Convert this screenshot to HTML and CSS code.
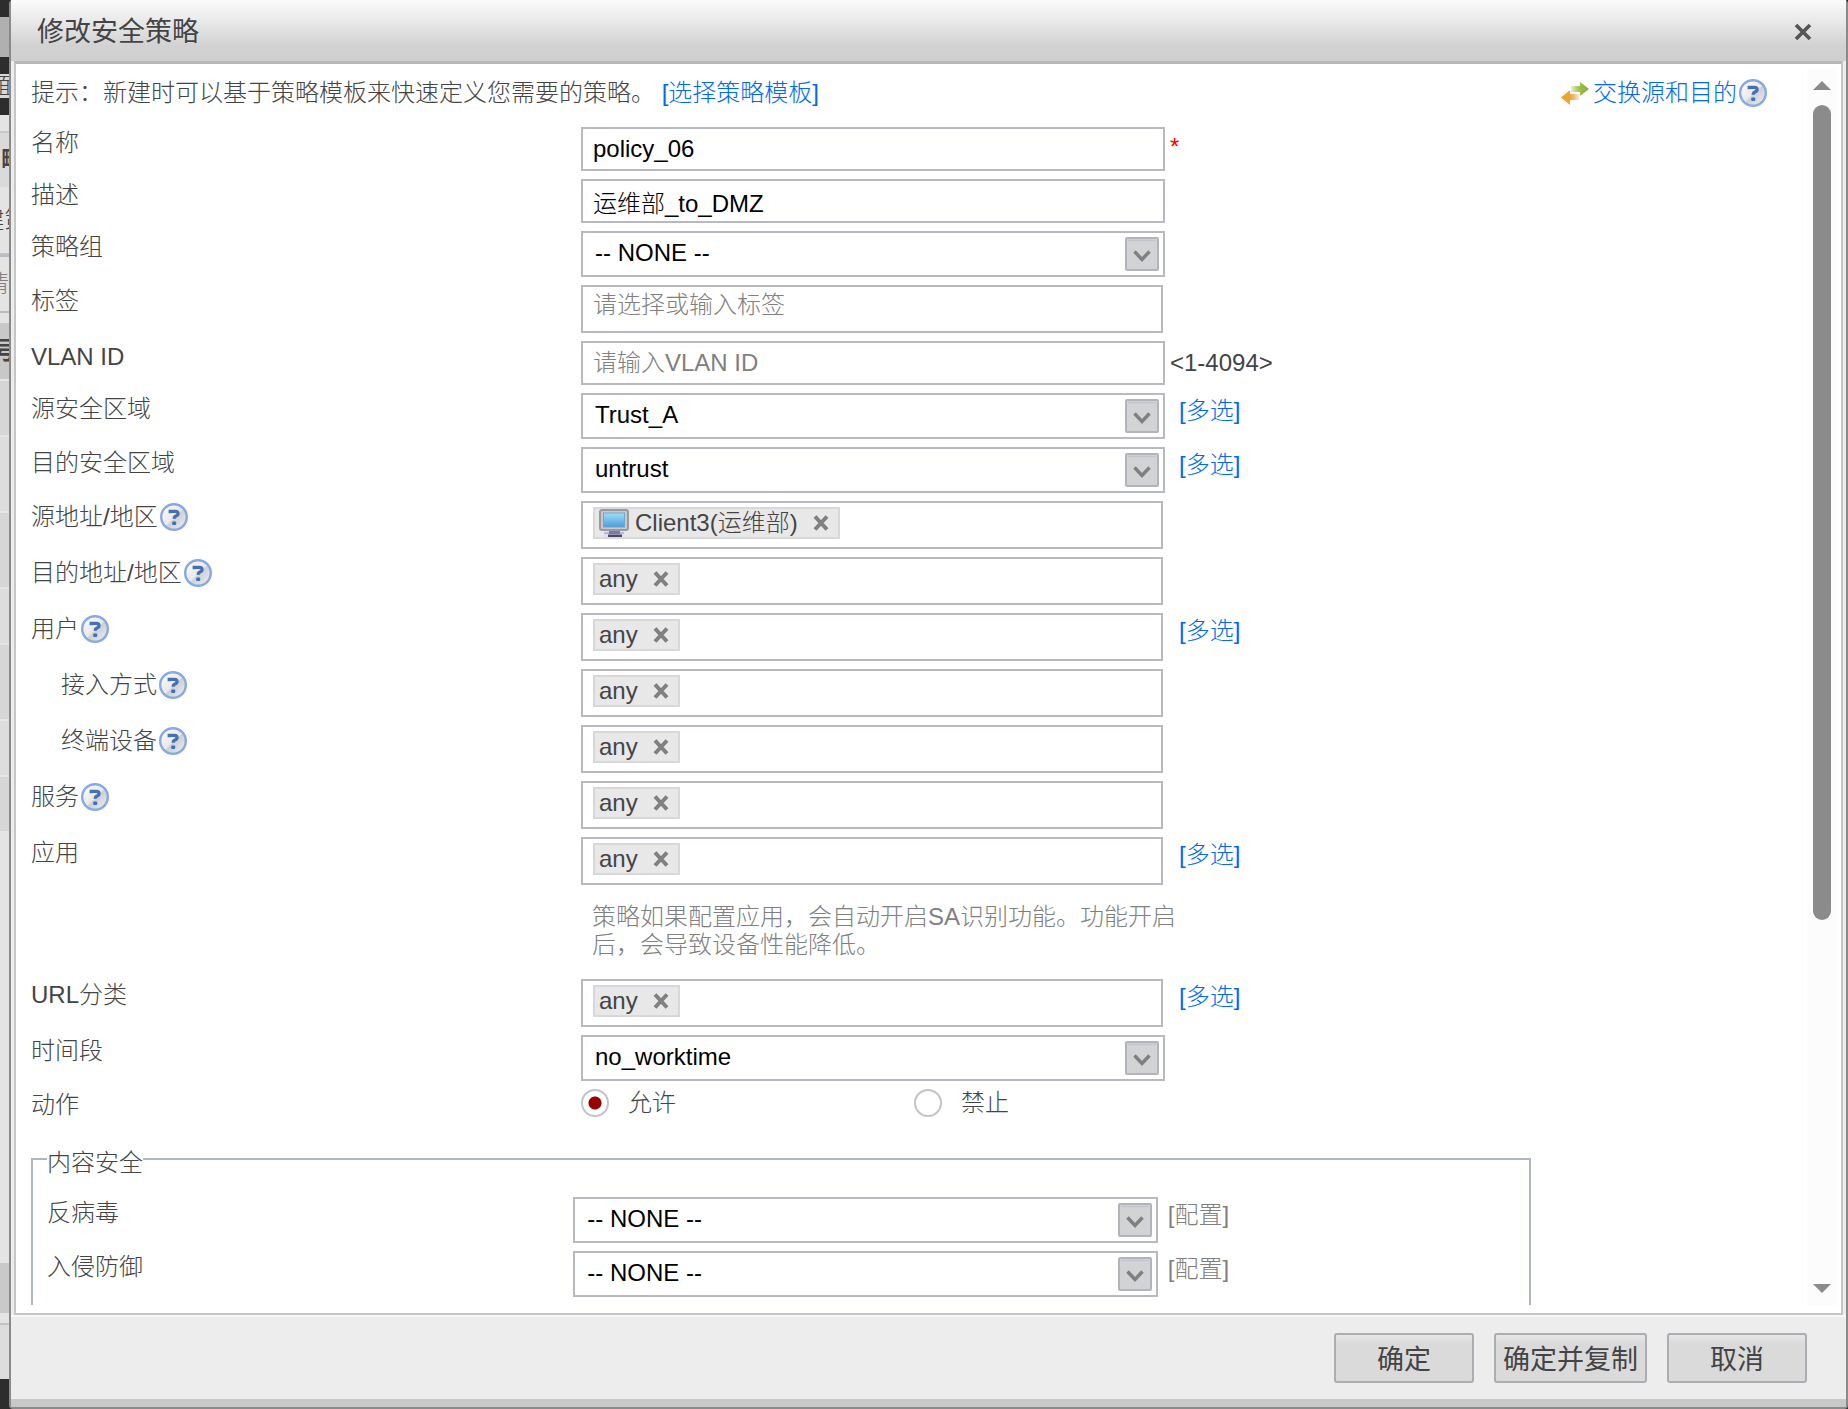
FILE: index.html
```html
<!DOCTYPE html>
<html lang="zh-CN">
<head>
    <meta charset="UTF-8">
    <meta name="viewport" content="width=device-width, initial-scale=1.0">
    <title>修改安全策略</title>
    <link rel="stylesheet" href="styles.css">
</head>
<body>
    <svg class="sprite" aria-hidden="true">
        <defs>
            <linearGradient id="helpFill" x1="0" y1="0" x2="1" y2="1">
                <stop offset="0" stop-color="#ffffff"/>
                <stop offset="0.5" stop-color="#e9e9ea"/>
                <stop offset="0.55" stop-color="#cfd0d3"/>
                <stop offset="1" stop-color="#f2f2f4"/>
            </linearGradient>
            <linearGradient id="screenFill" x1="0" y1="0" x2="0" y2="1">
                <stop offset="0" stop-color="#9ee0f8"/>
                <stop offset="1" stop-color="#4f9bdc"/>
            </linearGradient>
            <linearGradient id="greenFill" x1="0" y1="0" x2="1" y2="0">
                <stop offset="0" stop-color="#8cb43a" stop-opacity="0.2"/>
                <stop offset="0.5" stop-color="#9cc03f"/>
                <stop offset="1" stop-color="#86ab35"/>
            </linearGradient>
            <linearGradient id="orangeFill" x1="0" y1="0" x2="1" y2="0">
                <stop offset="0" stop-color="#f0a020"/>
                <stop offset="0.5" stop-color="#eda532"/>
                <stop offset="1" stop-color="#d98a4a" stop-opacity="0.2"/>
            </linearGradient>
        </defs>
        <symbol id="icon-help" viewBox="0 0 28 28">
            <circle cx="14" cy="14" r="12.8" fill="url(#helpFill)" stroke="#86a8e6" stroke-width="2.4"/>
            <path d="M10.2 10.2V8.4h5.200q2.700 0 2.700 2.200 0 1.700-2.100 2.500-1.800.7-1.800 2.700" fill="none" stroke="#4470b4" stroke-width="3.2"/>
            <rect x="12.2" y="18.4" width="4" height="3.6" rx="1" fill="#3d6fc4"/>
        </symbol>
        <symbol id="icon-arrow" viewBox="0 0 34 34">
            <rect x="1" y="1" width="32" height="32" rx="1" fill="#d2d3d5" stroke="#b2b3bb" stroke-width="2"/>
            <path d="M3 3.5h28" stroke="#c4c5cb" stroke-width="1.5"/>
            <path d="M9.5 14.5l7.5 8 7.5-8" fill="none" stroke="#808080" stroke-width="3.4"/>
        </symbol>
        <symbol id="icon-remove" viewBox="0 0 16 16">
            <path d="M2 1.500l12 13M14 1.500L2 14.500" fill="none" stroke="#808080" stroke-width="4"/>
        </symbol>
        <symbol id="icon-pc" viewBox="0 0 30 28">
            <rect x="1" y="1" width="28" height="20" rx="2" fill="#c9c9ca" stroke="#9a9a9c" stroke-width="2"/>
            <rect x="4.5" y="4" width="21" height="14" fill="url(#screenFill)" stroke="#6fa6cf"/>
            <path d="M5 23h20v2H5z" fill="#b9b4dc"/>
            <path d="M5 25h20v3H5z" fill="#e2e0ee"/>
            <path d="M10 22h11v3H10z" fill="#7c78b4"/>
            <path d="M9 25.5h14V28H9z" fill="#4a4768"/>
        </symbol>
        <symbol id="icon-swap" viewBox="0 0 28 24">
            <path d="M10 5h9V1l9 7-9 7v-4h-9z" fill="url(#greenFill)"/>
            <path d="M18 13H9V9l-9 7.500L9 24v-5h9z" fill="url(#orangeFill)"/>
        </symbol>
    </svg>

    <div class="page">
        <!-- the list page still showing left of the dialog -->
        <div class="behind" aria-hidden="true">
            <div class="behind-dark behind-h17"></div>
            <div class="behind-tab"></div>
            <div class="behind-dark behind-h17"></div>
            <div class="behind-menu"><span>面</span></div>
            <div class="behind-dark behind-h17"></div>
            <div class="behind-gap"></div>
            <div class="behind-title"><span>略</span></div>
            <div class="behind-tools"><span>建策</span></div>
            <div class="behind-search"><span>请</span></div>
            <div class="behind-head"><span>号</span></div>
            <div class="behind-row odd short"></div>
            <div class="behind-row"></div>
            <div class="behind-row odd"></div>
            <div class="behind-row short"></div>
            <div class="behind-row odd"></div>
            <div class="behind-row short"></div>
            <div class="behind-row odd short"></div>
            <div class="behind-empty"></div>
            <div class="behind-pager"></div>
            <div class="behind-foot"></div>
            <div class="behind-dark behind-end"></div>
        </div>

        <div class="dialog" role="dialog" aria-labelledby="dialogTitle">
            <div class="dialog-header">
                <h1 id="dialogTitle">修改安全策略</h1>
                <button type="button" class="close-btn" aria-label="关闭">
                    <svg viewBox="0 0 18 18"><path d="M2 2l14 14M16 2L2 16" fill="none" stroke="#555" stroke-width="3.6"/></svg>
                </button>
            </div>

            <div class="dialog-body">
                <form class="content" id="policyForm">
                    <div class="tip">
                        <p>提示：新建时可以基于策略模板来快速定义您需要的策略。 <a href="#">[选择策略模板]</a></p>
                        <div class="swap">
                            <svg class="swap-icon"><use href="#icon-swap"/></svg>
                            <a href="#">交换源和目的</a>
                            <svg class="help"><use href="#icon-help"/></svg>
                        </div>
                    </div>

                    <div class="rows">
                        <div class="row">
                            <label for="name">名称</label>
                            <input type="text" class="text" id="name" value="policy_06">
                            <span class="note required">*</span>
                        </div>
                        <div class="row">
                            <label for="desc">描述</label>
                            <input type="text" class="text" id="desc" value="运维部_to_DMZ">
                        </div>
                        <div class="row">
                            <label for="group">策略组</label>
                            <div class="select">
                                <select id="group"><option>-- NONE --</option></select>
                                <svg><use href="#icon-arrow"/></svg>
                            </div>
                        </div>
                        <div class="row">
                            <label for="tag">标签</label>
                            <div class="tag-box">
                                <input type="text" class="text tall" id="tag" placeholder="请选择或输入标签">
                            </div>
                        </div>
                        <div class="row">
                            <label for="vlan">VLAN ID</label>
                            <input type="text" class="text" id="vlan" placeholder="请输入VLAN ID">
                            <span class="note">&lt;1-4094&gt;</span>
                        </div>
                        <div class="row">
                            <label for="srcZone">源安全区域</label>
                            <div class="select">
                                <select id="srcZone"><option>Trust_A</option></select>
                                <svg><use href="#icon-arrow"/></svg>
                            </div>
                            <a href="#" class="multi">[多选]</a>
                        </div>
                        <div class="row">
                            <label for="dstZone">目的安全区域</label>
                            <div class="select">
                                <select id="dstZone"><option>untrust</option></select>
                                <svg><use href="#icon-arrow"/></svg>
                            </div>
                            <a href="#" class="multi">[多选]</a>
                        </div>
                        <div class="row">
                            <div class="label">源地址/地区<svg class="help"><use href="#icon-help"/></svg></div>
                            <div class="chips">
                                <span class="chip"><svg class="pc"><use href="#icon-pc"/></svg>Client3(运维部)<button type="button" aria-label="删除"><svg><use href="#icon-remove"/></svg></button></span>
                            </div>
                        </div>
                        <div class="row">
                            <div class="label">目的地址/地区<svg class="help"><use href="#icon-help"/></svg></div>
                            <div class="chips">
                                <span class="chip">any<button type="button" aria-label="删除"><svg><use href="#icon-remove"/></svg></button></span>
                            </div>
                        </div>
                        <div class="row">
                            <div class="label">用户<svg class="help"><use href="#icon-help"/></svg></div>
                            <div class="chips">
                                <span class="chip">any<button type="button" aria-label="删除"><svg><use href="#icon-remove"/></svg></button></span>
                            </div>
                            <a href="#" class="multi">[多选]</a>
                        </div>
                        <div class="row">
                            <div class="label sub">接入方式<svg class="help"><use href="#icon-help"/></svg></div>
                            <div class="chips">
                                <span class="chip">any<button type="button" aria-label="删除"><svg><use href="#icon-remove"/></svg></button></span>
                            </div>
                        </div>
                        <div class="row">
                            <div class="label sub">终端设备<svg class="help"><use href="#icon-help"/></svg></div>
                            <div class="chips">
                                <span class="chip">any<button type="button" aria-label="删除"><svg><use href="#icon-remove"/></svg></button></span>
                            </div>
                        </div>
                        <div class="row">
                            <div class="label">服务<svg class="help"><use href="#icon-help"/></svg></div>
                            <div class="chips">
                                <span class="chip">any<button type="button" aria-label="删除"><svg><use href="#icon-remove"/></svg></button></span>
                            </div>
                        </div>
                        <div class="row">
                            <div class="label">应用</div>
                            <div class="chips">
                                <span class="chip">any<button type="button" aria-label="删除"><svg><use href="#icon-remove"/></svg></button></span>
                            </div>
                            <a href="#" class="multi">[多选]</a>
                            <p class="remark">策略如果配置应用，会自动开启SA识别功能。功能开启后，会导致设备性能降低。</p>
                        </div>
                        <div class="row">
                            <div class="label">URL分类</div>
                            <div class="chips">
                                <span class="chip">any<button type="button" aria-label="删除"><svg><use href="#icon-remove"/></svg></button></span>
                            </div>
                            <a href="#" class="multi">[多选]</a>
                        </div>
                        <div class="row">
                            <label for="time">时间段</label>
                            <div class="select">
                                <select id="time"><option>no_worktime</option></select>
                                <svg><use href="#icon-arrow"/></svg>
                            </div>
                        </div>
                        <div class="row">
                            <div class="label">动作</div>
                            <div class="radios">
                                <label class="radio"><input type="radio" name="action" checked>允许</label>
                                <label class="radio"><input type="radio" name="action">禁止</label>
                            </div>
                        </div>
                    </div>

                    <fieldset>
                        <legend>内容安全</legend>
                        <div class="rows">
                            <div class="row">
                                <label for="av">反病毒</label>
                                <div class="select">
                                    <select id="av"><option>-- NONE --</option></select>
                                    <svg><use href="#icon-arrow"/></svg>
                                </div>
                                <span class="config">[配置]</span>
                            </div>
                            <div class="row">
                                <label for="ips">入侵防御</label>
                                <div class="select">
                                    <select id="ips"><option>-- NONE --</option></select>
                                    <svg><use href="#icon-arrow"/></svg>
                                </div>
                                <span class="config">[配置]</span>
                            </div>
                        </div>
                    </fieldset>
                </form>

                <div class="scrollbar" aria-hidden="true">
                    <svg viewBox="0 0 18 9"><path d="M9 0l9 9H0z"/></svg>
                    <div class="scroll-track"><div class="scroll-thumb"></div></div>
                    <svg viewBox="0 0 18 9"><path d="M9 9l9-9H0z"/></svg>
                </div>
            </div>

            <div class="dialog-footer">
                <button type="submit" form="policyForm">确定</button>
                <button type="button">确定并复制</button>
                <button type="button">取消</button>
            </div>
        </div>
    </div>
</body>
</html>
```
FILE: styles.css
```css
* {
    box-sizing: border-box;
}
body {
    margin: 0;
    font-family: "Liberation Sans", "Noto Sans CJK SC", sans-serif;
    font-size: 24px;
    font-weight: 300;
    line-height: 32px;
    color: #444444;
    background-color: #2d2d2d;
}
p, h1 {
    margin: 0;
}
a {
    color: #0066ff;
    text-decoration: none;
}
button, input, select {
    font: inherit;
    color: inherit;
}
.sprite {
    position: absolute;
    width: 0;
    height: 0;
}
.page {
    display: flex;
    height: 100vh;
}

/* page behind the dialog */
.behind {
    width: 9px;
    display: flex;
    flex-direction: column;
    overflow: hidden;
    background-color: #e4e4e4;
}
.behind > div {
    display: flex;
    flex-shrink: 0;
    align-items: center;
    justify-content: center;
    overflow: hidden;
    white-space: nowrap;
}
.behind-dark {
    background-color: #2d2d2d;
}
.behind-h17 {
    height: 17px;
}
.behind-tab {
    height: 40px;
    background-color: #b0b0b0;
}
.behind-menu {
    height: 24px;
    background-color: #d8d8d8;
}
.behind-gap {
    height: 18px;
    border-bottom: 2px solid #c8c8ca;
}
.behind-title {
    height: 54px;
    font-weight: bold;
    background-color: #dadada;
}
.behind > .behind-title {
    justify-content: flex-start;
    padding-left: 1px;
}
.behind-tools {
    height: 68px;
    border-bottom: 2px solid #c0c0c8;
}
.behind-search {
    height: 58px;
    margin-bottom: 10px;
    border-top: 2px solid #b9b9c1;
    border-bottom: 2px solid #b9b9c1;
    color: #808080;
}
.behind > .behind-search {
    justify-content: flex-end;
}
.behind-head {
    height: 56px;
    font-weight: bold;
    background-color: #c8c8c8;
}
.behind-row {
    height: 76px;
    background-color: #dddddd;
    border-top: 2px solid #e6e6e6;
}
.behind-row.odd {
    background-color: #d6d6d6;
}
.behind-row.short {
    height: 56px;
}
.behind > .behind-empty {
    flex: 1;
}
.behind-pager {
    height: 50px;
    background-color: #c9c9c9;
}
.behind-foot {
    height: 56px;
    margin-top: 10px;
    background-color: #dddddd;
    border-top: 2px solid #c4c4c4;
}
.behind-end {
    height: 30px;
}

/* dialog */
.dialog {
    flex: 1;
    min-width: 0;
    display: flex;
    flex-direction: column;
    background-color: #ededed;
    border: 2px solid #8a8a8a;
    border-top: none;
    border-radius: 4px;
}
.dialog-header {
    display: flex;
    align-items: center;
    justify-content: space-between;
    height: 61px;
    padding: 2px 34px 0 26px;
    background: linear-gradient(#fbfbfb, #e9e9e9 35%, #d2d2d2 75%, #cfcfcf);
}
.dialog-header h1 {
    font-size: 27px;
    font-weight: 400;
}
.close-btn {
    display: flex;
    padding: 0;
    border: none;
    background: none;
    cursor: pointer;
}
.close-btn svg {
    width: 18px;
    height: 18px;
}
.dialog-body {
    flex: 1;
    min-height: 0;
    display: flex;
    margin: 0 3px;
    padding: 5px 4px 8px 0;
    background-color: #ffffff;
    border: 2px solid #c6c6c6;
    border-top: 3px solid #b8b8b8;
}
.content {
    flex: 1;
    min-width: 0;
    padding: 8px 0 0 15px;
    overflow: hidden;
}
.tip {
    display: flex;
    justify-content: space-between;
    margin-bottom: 18px;
}
.swap {
    display: flex;
    align-items: center;
    margin-right: 40px;
}
.swap-icon {
    width: 28px;
    height: 24px;
    margin-right: 4px;
}
.help {
    width: 28px;
    height: 28px;
    flex-shrink: 0;
    margin-left: 2px;
}

/* form rows */
.rows {
    display: flex;
    flex-direction: column;
    gap: 8px;
}
.row {
    display: grid;
    grid-template-columns: 550fr 584fr 642fr;
    align-items: start;
}
fieldset .row {
    grid-template-columns: 526fr 584fr 371fr;
}
.label {
    display: flex;
    align-items: center;
}
.label.sub {
    padding-left: 30px;
}
.text {
    width: 100%;
    height: 44px;
    padding: 0 10px;
    border: 2px solid #b9b9c1;
    border-radius: 0;
    background-color: #ffffff;
    color: #000000;
    outline: none;
}
.tag-box {
    display: flex;
    padding-right: 2px;
}
.text.tall {
    height: 48px;
    padding-bottom: 8px;
}
.text::placeholder {
    color: #808080;
    opacity: 1;
}
.select {
    display: grid;
    align-items: center;
}
.select select {
    grid-area: 1 / 1;
    width: 100%;
    height: 46px;
    padding: 0 44px 2px 12px;
    appearance: none;
    border: 2px solid #b9b9c1;
    border-radius: 0;
    background-color: #ffffff;
    color: #000000;
    outline: none;
}
.select svg {
    grid-area: 1 / 1;
    justify-self: end;
    width: 34px;
    height: 34px;
    margin-right: 6px;
    pointer-events: none;
}
.chips {
    display: flex;
    height: 48px;
    margin-right: 2px;
    padding: 4px 10px;
    border: 2px solid #b9b9c1;
}
.chip {
    display: flex;
    align-items: center;
    height: 32px;
    padding: 0 9px 0 4px;
    border: 2px solid #d8d8d8;
    background-color: #e8e8e8;
}
.chip .pc {
    width: 30px;
    height: 28px;
    margin-right: 6px;
}
.chip button {
    display: flex;
    margin-left: 15px;
    padding: 0;
    border: none;
    background: none;
    cursor: pointer;
}
.chip button svg {
    width: 16px;
    height: 16px;
}
.note {
    padding: 6px 0 0 5px;
}
.required {
    padding-top: 4px;
    color: #ff0000;
}
.multi {
    padding: 2px 0 0 14px;
}
.config {
    padding: 2px 0 0 10px;
    color: #808080;
}
.remark {
    grid-column: 2;
    margin-right: -14px;
    padding: 18px 0 12px 11px;
    line-height: 28px;
    color: #808080;
}
.radios {
    display: grid;
    grid-template-columns: 333fr 251fr;
}
.radio {
    display: flex;
    align-items: center;
    gap: 19px;
    height: 28px;
}
.radio input {
    appearance: none;
    width: 28px;
    height: 28px;
    margin: 0;
    border: 2px solid #c4c4c4;
    border-radius: 50%;
    background-color: #ffffff;
}
.radio input:checked {
    background: radial-gradient(circle, #990000 6px, #ffffff 7px);
}
fieldset {
    max-width: 1500px;
    margin: 20px 0 0;
    padding: 20px 0 48px 14px;
    border: 2px solid #b1b5c9;
}
legend {
    padding: 8px 0 0;
    line-height: 28px;
}

/* scrollbar */
.scrollbar {
    display: flex;
    flex-direction: column;
    align-items: center;
    width: 30px;
    padding: 12px 0;
    background-color: #fcfcfc;
}
.scrollbar svg {
    width: 18px;
    height: 9px;
    fill: #8b8b8b;
}
.scroll-track {
    flex: 1;
    padding: 15px 0;
}
.scroll-thumb {
    width: 18px;
    height: 70%;
    border-radius: 9px;
    background-color: #8b8b8b;
}

.dialog-footer {
    display: flex;
    align-items: center;
    justify-content: flex-end;
    gap: 20px;
    height: 92px;
    padding: 0 39px;
    border-top: 2px solid #f8f8f8;
    border-bottom: 8px solid #c8c8c8;
}
.dialog-footer button {
    min-width: 140px;
    height: 50px;
    padding: 4px 7px 0;
    font-size: 27px;
    font-weight: 400;
    border: 2px solid #acacb2;
    border-radius: 3px;
    background: linear-gradient(#e6e6e6, #dadada 20%);
    cursor: pointer;
}
```
